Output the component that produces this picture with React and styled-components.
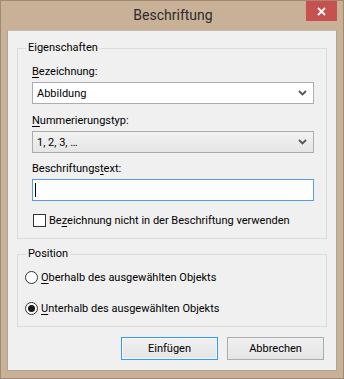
import React from "react";
import styled, { createGlobalStyle } from "styled-components";

const Global = createGlobalStyle`
  html, body { margin: 0; padding: 0; background: #c8b097; }
  * { box-sizing: border-box; }
  body { font-family: Roboto, "Liberation Sans", sans-serif; font-size: 11px; color: #000; }
`;

const Frame = styled.div`
  width: 344px;
  height: 379px;
  background: #c9b198;
  border: 1px solid #a18a72;
  display: flex;
  flex-direction: column;
  padding: 0 6px 7px 6px;
`;

const TitleBar = styled.div`
  height: 29px;
  display: flex;
  align-items: stretch;
  flex: none;
`;

const Spacer = styled.div`
  width: 31px;
  flex: none;
`;

const Title = styled.div`
  flex: 1;
  text-align: center;
  font-size: 14px;
  line-height: 29px;
  color: #2b2b2b;
  padding-left: 2px;
`;

const CloseButton = styled.div`
  width: 31px;
  height: 20px;
  background: #c75050;
  display: flex;
  align-items: center;
  justify-content: center;
  flex: none;
`;

const Client = styled.div`
  flex: 1;
  background: #f0f0f0;
  border: 1px solid #a9a49d;
  border-top-color: #c3bdb3;
  padding: 17px 9px 10px 9px;
  display: flex;
  flex-direction: column;
`;

const Group = styled.div`
  position: relative;
  border: 1px solid #dcdcdc;
  padding: ${(p) => p.$pad};
  margin-bottom: ${(p) => p.$mb || 0}px;
  display: flex;
  flex-direction: column;
`;

const Legend = styled.span`
  position: absolute;
  top: -9px;
  left: 8px;
  padding: 0 2px;
  background: #f0f0f0;
  line-height: 16px;
  color: #000;
`;

const Label = styled.div`
  line-height: 16px;
  margin-bottom: 2px;
`;

const U = styled.span`
  text-decoration: underline;
  text-underline-offset: 2px;
`;

const SelectBox = styled.div`
  height: 22px;
  border: 1px solid ${(p) => (p.$flat ? "#abadb3" : "#acacac")};
  background: ${(p) => (p.$flat ? "#fff" : "linear-gradient(#f2f2f2, #e5e5e5)")};
  display: flex;
  align-items: center;
  padding: 0 6px 0 4px;
  margin-bottom: ${(p) => p.$mb}px;
`;

const SelectText = styled.span`
  flex: 1;
`;

const TextInput = styled.div`
  height: 22px;
  border: 1px solid #569de5;
  background: #fff;
  display: flex;
  align-items: center;
  padding-left: 2px;
  margin-bottom: 11px;
`;

const Caret = styled.span`
  width: 1px;
  height: 14px;
  background: #000;
`;

const CheckRow = styled.div`
  display: flex;
  align-items: center;
  height: 16px;
  padding-left: 1px;
`;

const CheckBox = styled.span`
  width: 13px;
  height: 13px;
  border: 1px solid #333;
  background: #fff;
  margin-right: 3px;
  flex: none;
`;

const RadioRow = styled.div`
  display: flex;
  align-items: center;
  height: 16px;
  margin-bottom: ${(p) => p.$mb || 0}px;
`;

const Radio = styled.span`
  width: 13px;
  height: 13px;
  border-radius: 50%;
  border: 1px solid #333;
  background: #fff;
  margin-right: 3px;
  display: flex;
  align-items: center;
  justify-content: center;
  flex: none;
  &::after {
    content: "";
    display: ${(p) => (p.$checked ? "block" : "none")};
    width: 7px;
    height: 7px;
    border-radius: 50%;
    background: #1a1a1a;
  }
`;

const ButtonRow = styled.div`
  display: flex;
  justify-content: flex-end;
  gap: 9px;
  padding-right: 3px;
`;

const Button = styled.div`
  width: 97px;
  height: 23px;
  border: 1px solid ${(p) => (p.$default ? "#3399ff" : "#acacac")};
  background: linear-gradient(#f0f0f0, #e5e5e5);
  display: flex;
  align-items: center;
  justify-content: center;
  ${(p) => p.$default && "box-shadow: inset 0 0 0 1px #f4f9ff;"}
`;

const Chevron = () => (
  <svg width="9" height="6" viewBox="0 0 9 6">
    <path d="M1 1 L4.5 4.5 L8 1" fill="none" stroke="#555" strokeWidth="1.8" />
  </svg>
);

export default function App() {
  return (
    <>
      <Global />
      <Frame>
        <TitleBar>
          <Spacer />
          <Title>Beschriftung</Title>
          <CloseButton>
            <svg width="9" height="9" viewBox="0 0 9 9">
              <path d="M1 1 L8 8 M8 1 L1 8" stroke="#fff" strokeWidth="1.8" />
            </svg>
          </CloseButton>
        </TitleBar>
        <Client>
          <Group $pad="15px 12px 10px 14px" $mb={15}>
            <Legend>Eigenschaften</Legend>
            <Label>
              <U>B</U>ezeichnung:
            </Label>
            <SelectBox $flat $mb={9}>
              <SelectText>Abbildung</SelectText>
              <Chevron />
            </SelectBox>
            <Label>
              <U>N</U>ummerierungstyp:
            </Label>
            <SelectBox $mb={8}>
              <SelectText>1, 2, 3, …</SelectText>
              <Chevron />
            </SelectBox>
            <Label>
              Beschriftungs<U>t</U>ext:
            </Label>
            <TextInput>
              <Caret />
            </TextInput>
            <CheckRow>
              <CheckBox />
              <span>
                Be<U>z</U>eichnung nicht in der Beschriftung verwenden
              </span>
            </CheckRow>
          </Group>
          <Group $pad="14px 12px 10px 7px" $mb={10}>
            <Legend>Position</Legend>
            <RadioRow $mb={15}>
              <Radio />
              <span>
                <U>O</U>berhalb des ausgewählten Objekts
              </span>
            </RadioRow>
            <RadioRow>
              <Radio $checked />
              <span>
                <U>U</U>nterhalb des ausgewählten Objekts
              </span>
            </RadioRow>
          </Group>
          <ButtonRow>
            <Button $default>Einfügen</Button>
            <Button>Abbrechen</Button>
          </ButtonRow>
        </Client>
      </Frame>
    </>
  );
}
